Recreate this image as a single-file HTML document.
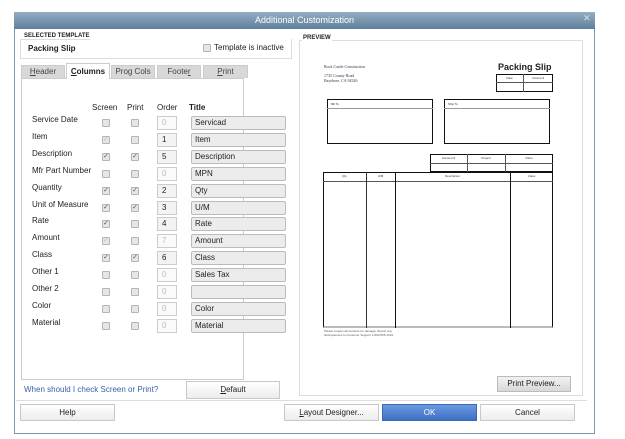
<!DOCTYPE html>
<html><head><style>
*{box-sizing:border-box;margin:0;padding:0}
body{width:625px;height:439px;background:#fff;position:relative;font-family:"Liberation Sans",sans-serif;font-size:8px;color:#222;overflow:hidden}
.a{position:absolute}
.win{left:14px;top:12px;width:581px;height:422px;border:1px solid #7f97ad;border-top:none;background:#fff}
.title{left:14px;top:12px;width:581px;height:17px;background:linear-gradient(#93aec4,#5f7f9b);color:#fff;font-size:9px;text-align:center;line-height:17px}
.lbl{font-size:8px;color:#222}
.cb{width:8px;height:8px;border:1px solid #b5b5b5;background:#e6e6e6;border-radius:1px;font-size:7px;line-height:6px;text-align:center;color:#555}
.ob{width:20px;height:14px;border:1px solid #ccc;background:#f3f3f3;font-size:8px;padding-left:4px;line-height:12px}
.tb{width:95px;height:14px;border:1px solid #bbb;background:#ececec;border-radius:2px;font-size:8px;padding-left:3px;line-height:12px}
.tab{top:65px;height:13px;border:1px solid #ccc;border-bottom:none;background:#d8d8d8;font-size:8px;text-align:center;line-height:12px;color:#444}
.btn{height:17px;border:1px solid #c8c8c8;background:linear-gradient(#fff,#ececec);font-size:8px;text-align:center;line-height:15px;color:#222}
.pb{border:1px solid #111}
.t{position:absolute;font-size:3px;color:#333;text-align:center}
</style></head><body>
<div class="a win"></div>
<div class="a title">Additional Customization</div>
<div class="a" style="left:583px;top:13px;color:#dde;font-size:9px">✕</div>

<div class="a" style="left:20px;top:39px;width:272px;height:20px;border:1px solid #ddd;border-top:none"></div>
<div class="a" style="left:20px;top:39px;width:70px;border-top:1px solid #ddd"></div>
<div class="a" style="left:23px;top:33px;font-size:6px;font-weight:bold;background:#fff;padding:0 1px">SELECTED TEMPLATE</div>
<div class="a" style="left:28px;top:44px;font-size:8px;font-weight:bold">Packing Slip</div>
<div class="a cb" style="left:203px;top:44px"></div>
<div class="a" style="left:214px;top:43px;font-size:8px">Template is inactive</div>

<div class="a tab" style="left:21px;width:44px"><u>H</u>eader</div>
<div class="a tab" style="left:66px;top:63px;height:16px;width:44px;background:#fff;font-weight:bold;color:#222;z-index:2;line-height:16px"><u>C</u>olumns</div>
<div class="a tab" style="left:111px;width:44px">Prog Cols</div>
<div class="a tab" style="left:157px;width:44px">Foote<u>r</u></div>
<div class="a tab" style="left:203px;width:45px"><u>P</u>rint</div>
<div class="a" style="left:21px;top:78px;width:223px;height:302px;border:1px solid #ccc"></div>

<div class="a lbl" style="left:92px;top:103px">Screen</div>
<div class="a lbl" style="left:127px;top:103px">Print</div>
<div class="a lbl" style="left:157px;top:103px">Order</div>
<div class="a lbl" style="left:189px;top:103px;font-weight:bold">Title</div>

<div id="rows"></div>

<div class="a" style="left:24px;top:385px;color:#3b5ea8;font-size:8px">When should I check Screen or Print?</div>
<div class="a btn" style="left:186px;top:381px;width:94px;height:18px"><u>D</u>efault</div>

<div class="a" style="left:299px;top:40px;width:284px;height:356px;border:1px solid #ddd"></div>
<div class="a" style="left:302px;top:35px;font-size:6px;font-weight:bold;background:#fff;padding:0 1px">PREVIEW</div>
<div class="a" style="left:324px;top:64px;font-size:4px;font-family:'Liberation Serif',serif;color:#334">Rock Castle Construction</div>
<div class="a" style="left:324px;top:73px;font-size:4px;font-family:'Liberation Serif',serif;line-height:5px;color:#334">1735 County Road<br>Bayshore, CA 94326</div>
<div class="a" style="left:498px;top:62px;font-size:9px;font-weight:bold">Packing Slip</div>
<div class="a pb" style="left:496px;top:74px;width:57px;height:18px"></div>
<div class="a" style="left:496px;top:82px;width:57px;border-top:1px solid #555"></div>
<div class="a" style="left:523px;top:74px;height:18px;border-left:1px solid #555"></div>
<div class="t" style="left:496px;top:76px;width:27px">Date</div>
<div class="t" style="left:523px;top:76px;width:30px">Invoice #</div>
<div class="a pb" style="left:327px;top:99px;width:106px;height:45px"></div>
<div class="a" style="left:327px;top:108px;width:106px;border-top:1px solid #999"></div>
<div class="t" style="left:331px;top:102px">Bill To</div>
<div class="a pb" style="left:444px;top:99px;width:106px;height:45px"></div>
<div class="a" style="left:444px;top:108px;width:106px;border-top:1px solid #999"></div>
<div class="t" style="left:448px;top:102px">Ship To</div>
<div class="a pb" style="left:430px;top:154px;width:123px;height:18px"></div>
<div class="a" style="left:430px;top:163px;width:123px;border-top:1px solid #555"></div>
<div class="a" style="left:467px;top:154px;height:18px;border-left:1px solid #555"></div>
<div class="a" style="left:505px;top:154px;height:18px;border-left:1px solid #555"></div>
<div class="t" style="left:430px;top:156px;width:37px">Account #</div>
<div class="t" style="left:467px;top:156px;width:38px">Project</div>
<div class="t" style="left:505px;top:156px;width:48px">Other</div>
<div class="a pb" style="left:323px;top:172px;width:230px;height:156px;border-bottom:2px solid #bbb"></div>
<div class="a" style="left:323px;top:181px;width:230px;border-top:1px solid #555"></div>
<div class="a" style="left:366px;top:172px;height:156px;border-left:1px solid #333"></div>
<div class="a" style="left:395px;top:172px;height:156px;border-left:1px solid #111"></div>
<div class="a" style="left:510px;top:172px;height:156px;border-left:1px solid #111"></div>
<div class="t" style="left:323px;top:174px;width:43px">Qty</div>
<div class="t" style="left:366px;top:174px;width:29px">U/M</div>
<div class="t" style="left:395px;top:174px;width:115px">Description</div>
<div class="t" style="left:510px;top:174px;width:43px">Class</div>
<div class="a" style="left:324px;top:329px;font-size:3px;line-height:4px;color:#556">Please inspect all contents for damage. Report any<br>discrepancies to Customer Support 1-800-555-1234</div>
<div class="a" style="left:497px;top:376px;width:74px;height:16px;border:1px solid #bbb;background:linear-gradient(#f2f2f2,#d8d8d8);font-size:8px;text-align:center;line-height:14px">Print Preview...</div>

<div class="a" style="left:16px;top:400px;width:571px;border-top:1px solid #ddd"></div>
<div class="a btn" style="left:20px;top:404px;width:95px">Help</div>
<div class="a btn" style="left:284px;top:404px;width:95px"><u>L</u>ayout Designer...</div>
<div class="a btn" style="left:382px;top:404px;width:95px;background:linear-gradient(#6a9ae0,#3e6fc6);border-color:#3a66b5;color:#fff">OK</div>
<div class="a btn" style="left:480px;top:404px;width:95px">Cancel</div>

<script>
var R=[["Service Date",0,0,1,"0","Servicad"],["Item",1,0,0,"1","Item"],["Description",2,2,0,"5","Description"],["Mfr Part Number",0,0,1,"0","MPN"],["Quantity",2,2,0,"2","Qty"],["Unit of Measure",2,2,0,"3","U/M"],["Rate",2,0,0,"4","Rate"],["Amount",1,0,1,"7","Amount"],["Class",2,2,0,"6","Class"],["Other 1",0,0,1,"0","Sales Tax"],["Other 2",0,0,1,"0",""],["Color",0,0,1,"0","Color"],["Material",0,0,1,"0","Material"]];
var h="";R.forEach(function(r,i){var y=114+i*16.9;
h+='<div class="a lbl" style="left:32px;top:'+(y+1)+'px">'+r[0]+'</div>';
h+='<div class="a cb" style="left:102px;top:'+(y+5)+'px;'+(r[1]==1?'color:#bbb':'')+'">'+(r[1]?'✓':'')+'</div>';
h+='<div class="a cb" style="left:131px;top:'+(y+5)+'px">'+(r[2]?'✓':'')+'</div>';
h+='<div class="a ob" style="left:157px;top:'+(y+2)+'px;'+(r[3]?'color:#bbb;background:#fafafa':'')+'">'+r[4]+'</div>';
h+='<div class="a tb" style="left:191px;top:'+(y+2)+'px">'+r[5]+'</div>';});
document.getElementById("rows").innerHTML=h;
</script>
</body></html>
